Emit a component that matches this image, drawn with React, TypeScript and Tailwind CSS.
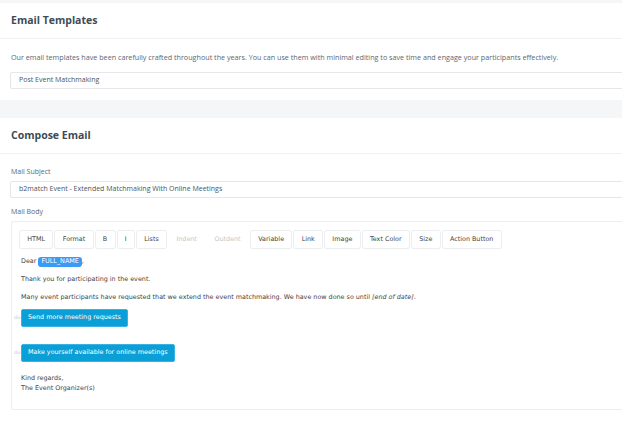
import { FC } from "react";

const toolbar = [
  { label: "HTML" },
  { label: "Format" },
  { label: "B" },
  { label: "I" },
  { label: "Lists" },
  { label: "Indent", disabled: true },
  { label: "Outdent", disabled: true },
  { label: "Variable" },
  { label: "Link" },
  { label: "Image" },
  { label: "Text Color" },
  { label: "Size" },
  { label: "Action Button" },
];

const ToolbarButton: FC<{ label: string; disabled?: boolean }> = ({ label, disabled }) => (
  <div
    className={
      disabled
        ? "h-[17px] px-[7.3px] flex items-center text-[#c3c7cb]"
        : "h-[17px] px-[7.3px] flex items-center bg-white text-[#444] rounded-[2px] shadow-[0_0_0_1px_#eceef0,0_1px_1px_rgba(0,0,0,0.08)]"
    }
  >
    {label}
  </div>
);

const ActionButton: FC<{ label: string }> = ({ label }) => (
  <div className="flex items-center">
    <span className="w-[9px] pl-[2px] text-[4.5px] text-[#c8c8c8]">div</span>
    <div className="h-[18px] px-[6px] flex items-center bg-[#0a9fd6] text-white rounded-[2px] border border-[#3ab3e2]">
      {label}
    </div>
  </div>
);

const Input: FC<{ value: string }> = ({ value }) => (
  <div className="h-[17px] ml-[10px] -mr-[20px] border border-[#e5e7eb] rounded-[2px] flex items-center pl-[8px] text-[7px] text-[#4b5560]">
    {value}
  </div>
);

export default function App() {
  return (
    <div className="w-[622px] h-[430px] overflow-hidden bg-[#f5f6f8] font-['Open_Sans',sans-serif]">
      <div className="mt-[3px] bg-white">
        <div className="h-[36px] px-[11px] flex items-center border-b border-[#eef0f2]">
          <h1 className="text-[10.5px] font-bold text-[#3d4b57]">Email Templates</h1>
        </div>
        <div className="pt-[12px] pb-[11px]">
          <p className="px-[11px] text-[7.2px] text-[#5b6772] leading-[12px]">
            Our email templates have been carefully crafted throughout the years. You can use them with minimal editing to save time and engage your participants effectively.
          </p>
          <div className="mt-[9px]">
            <Input value="Post Event Matchmaking" />
          </div>
        </div>
      </div>
      <div className="mt-[18px] bg-white h-[312px]">
        <div className="h-[36px] px-[11px] flex items-center border-b border-[#eef0f2]">
          <h1 className="text-[10.5px] font-bold text-[#3d4b57]">Compose Email</h1>
        </div>
        <div className="pt-[12px]">
          <label className="block px-[11px] text-[7px] text-[#5b6772] leading-[12px]">Mail Subject</label>
          <div className="mt-[3px]">
            <Input value="b2match Event - Extended Matchmaking With Online Meetings" />
          </div>
          <label className="block mt-[8px] px-[11px] text-[7px] text-[#5b6772] leading-[12px]">Mail Body</label>
          <div className="mt-[3px] ml-[11px] -mr-[20px] h-[189px] border border-[#eceef0] rounded-[2px] font-['DejaVu_Sans',sans-serif] text-[6.4px] text-[#444]">
            <div className="flex items-center gap-[3px] pl-[8px] pt-[9px]">
              {toolbar.map((b) => (
                <ToolbarButton key={b.label} label={b.label} disabled={b.disabled} />
              ))}
            </div>
            <div className="pl-[9px] pt-[9px]">
              <p className="flex items-center h-[10px]">
                Dear&nbsp;
                <span className="bg-[#3a9bf5] text-white rounded-[3px] px-[3px] h-[10px] flex items-center">FULL_NAME</span>,
              </p>
              <p className="mt-[8px] h-[10px] flex items-center">Thank you for participating in the event.</p>
              <p className="mt-[8px] h-[10px] flex items-center">
                Many event participants have requested that we extend the event matchmaking. We have now done so until&nbsp;<i>[end of date]</i>.
              </p>
            </div>
            <div className="mt-[6px]">
              <ActionButton label="Send more meeting requests" />
            </div>
            <div className="mt-[17px]">
              <ActionButton label="Make yourself available for online meetings" />
            </div>
            <div className="pl-[9px] mt-[11px] leading-[10px]">
              <p>Kind regards,</p>
              <p>The Event Organizer(s)</p>
            </div>
          </div>
        </div>
      </div>
      <div className="h-[2px] border-t border-[#eceef0]" />
    </div>
  );
}
